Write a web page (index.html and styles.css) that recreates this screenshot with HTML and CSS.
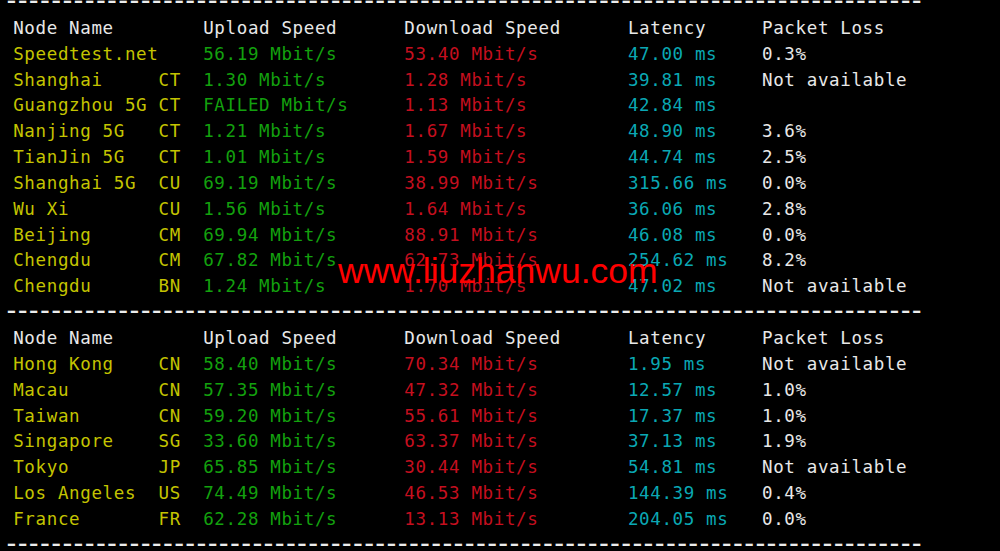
FILE: index.html
```html
<!DOCTYPE html>
<html>
<head>
<meta charset="utf-8">
<link rel="stylesheet" href="styles.css">
</head>
<body>
<div class="term">
<div class="line rule">----------------------------------------------------------------------------------</div>
<div class="line"><span class="w"> Node Name        </span><span class="w">Upload Speed      </span><span class="w">Download Speed      </span><span class="w">Latency     </span><span class="w">Packet Loss</span></div>
<div class="line"><span class="y"> Speedtest.net    </span><span class="g">56.19 Mbit/s      </span><span class="r">53.40 Mbit/s        </span><span class="c">47.00 ms    </span><span class="w">0.3%</span></div>
<div class="line"><span class="y"> Shanghai     CT  </span><span class="g">1.30 Mbit/s       </span><span class="r">1.28 Mbit/s         </span><span class="c">39.81 ms    </span><span class="w">Not available</span></div>
<div class="line"><span class="y"> Guangzhou 5G CT  </span><span class="g">FAILED Mbit/s     </span><span class="r">1.13 Mbit/s         </span><span class="c">42.84 ms    </span><span class="w"></span></div>
<div class="line"><span class="y"> Nanjing 5G   CT  </span><span class="g">1.21 Mbit/s       </span><span class="r">1.67 Mbit/s         </span><span class="c">48.90 ms    </span><span class="w">3.6%</span></div>
<div class="line"><span class="y"> TianJin 5G   CT  </span><span class="g">1.01 Mbit/s       </span><span class="r">1.59 Mbit/s         </span><span class="c">44.74 ms    </span><span class="w">2.5%</span></div>
<div class="line"><span class="y"> Shanghai 5G  CU  </span><span class="g">69.19 Mbit/s      </span><span class="r">38.99 Mbit/s        </span><span class="c">315.66 ms   </span><span class="w">0.0%</span></div>
<div class="line"><span class="y"> Wu Xi        CU  </span><span class="g">1.56 Mbit/s       </span><span class="r">1.64 Mbit/s         </span><span class="c">36.06 ms    </span><span class="w">2.8%</span></div>
<div class="line"><span class="y"> Beijing      CM  </span><span class="g">69.94 Mbit/s      </span><span class="r">88.91 Mbit/s        </span><span class="c">46.08 ms    </span><span class="w">0.0%</span></div>
<div class="line"><span class="y"> Chengdu      CM  </span><span class="g">67.82 Mbit/s      </span><span class="r">62.73 Mbit/s        </span><span class="c">254.62 ms   </span><span class="w">8.2%</span></div>
<div class="line"><span class="y"> Chengdu      BN  </span><span class="g">1.24 Mbit/s       </span><span class="r">1.70 Mbit/s         </span><span class="c">47.02 ms    </span><span class="w">Not available</span></div>
<div class="line rule">----------------------------------------------------------------------------------</div>
<div class="line"><span class="w"> Node Name        </span><span class="w">Upload Speed      </span><span class="w">Download Speed      </span><span class="w">Latency     </span><span class="w">Packet Loss</span></div>
<div class="line"><span class="y"> Hong Kong    CN  </span><span class="g">58.40 Mbit/s      </span><span class="r">70.34 Mbit/s        </span><span class="c">1.95 ms     </span><span class="w">Not available</span></div>
<div class="line"><span class="y"> Macau        CN  </span><span class="g">57.35 Mbit/s      </span><span class="r">47.32 Mbit/s        </span><span class="c">12.57 ms    </span><span class="w">1.0%</span></div>
<div class="line"><span class="y"> Taiwan       CN  </span><span class="g">59.20 Mbit/s      </span><span class="r">55.61 Mbit/s        </span><span class="c">17.37 ms    </span><span class="w">1.0%</span></div>
<div class="line"><span class="y"> Singapore    SG  </span><span class="g">33.60 Mbit/s      </span><span class="r">63.37 Mbit/s        </span><span class="c">37.13 ms    </span><span class="w">1.9%</span></div>
<div class="line"><span class="y"> Tokyo        JP  </span><span class="g">65.85 Mbit/s      </span><span class="r">30.44 Mbit/s        </span><span class="c">54.81 ms    </span><span class="w">Not available</span></div>
<div class="line"><span class="y"> Los Angeles  US  </span><span class="g">74.49 Mbit/s      </span><span class="r">46.53 Mbit/s        </span><span class="c">144.39 ms   </span><span class="w">0.4%</span></div>
<div class="line"><span class="y"> France       FR  </span><span class="g">62.28 Mbit/s      </span><span class="r">13.13 Mbit/s        </span><span class="c">204.05 ms   </span><span class="w">0.0%</span></div>
<div class="line rule">----------------------------------------------------------------------------------</div>
</div>
<div class="watermark">www.liuzhanwu.com</div>
</body>
</html>
```
FILE: styles.css
```css
html, body {
  margin: 0;
  padding: 0;
  background: #000;
  height: 551px;
  overflow: hidden;
}
body {
  position: relative;
}
.term {
  margin-top: -10px;
  padding-left: 2px;
  font-family: "DejaVu Sans Mono", monospace;
  font-size: 17.5px;
  letter-spacing: 0.64px;
  line-height: 25.85px;
  color: #e8e8e8;
}
.line {
  white-space: pre;
  height: 25.85px;
  overflow: visible;
}
.rule {
  color: #ececec;
  font-size: 28px;
  letter-spacing: -5.68px;
  line-height: 21px;
  padding-left: 1px;
}
.w { color: #e8e8e8; }
.y { color: #c4c400; }
.g { color: #13a10e; }
.r { color: #c50f1f; }
.c { color: #0aa8b4; }
.watermark {
  position: absolute;
  left: 338px;
  top: 253px;
  font-family: "Liberation Sans", Arial, sans-serif;
  font-size: 35.5px;
  line-height: 36px;
  color: #ff0000;
  white-space: nowrap;
}
```
